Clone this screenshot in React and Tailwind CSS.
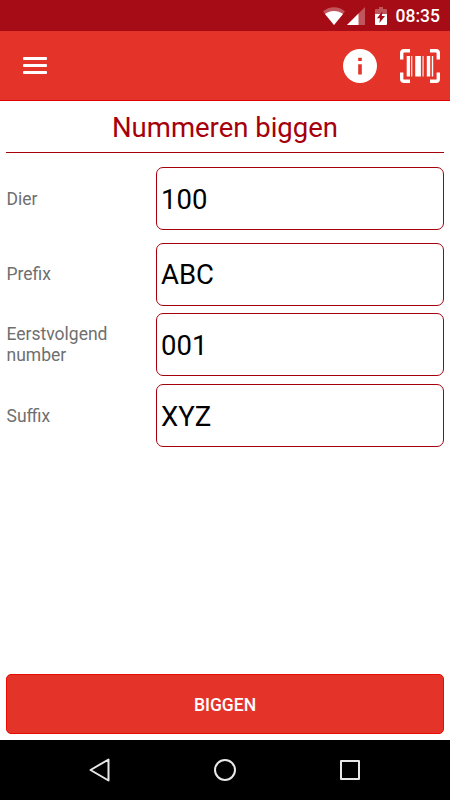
const FIELDS = [
    { label: 'Dier', value: '100', className: 'mt-3.5' },
    { label: 'Prefix', value: 'ABC', className: 'mt-[12.500px]' },
    { label: 'Eerstvolgend number', value: '001', className: 'mt-[7.500px]' },
    { label: 'Suffix', value: 'XYZ', className: 'mt-2' },
];

const WifiIcon = () => (
    <svg width="22" height="18" viewBox="0 0 22 18" className="shrink-0">
        <path d="M0 4.400C3 1.700 6.900 0.200 11 0.200S19 1.700 22 4.400L11 17.900Z" fill="#fff" fillOpacity="0.3" />
        <path d="M2 6.900C4.500 4.900 7.600 3.900 11 3.900S17.500 4.900 20 6.900L11 17.900Z" fill="#fff" />
    </svg>
);

const SignalIcon = () => (
    <svg width="18" height="18" viewBox="0 0 18 18" className="shrink-0">
        <path d="M0 18L18 0V18Z" fill="#fff" fillOpacity="0.3" />
        <path d="M0 18L11.500 6.500V18Z" fill="#fff" />
    </svg>
);

const BatteryIcon = () => (
    <svg width="12" height="18" viewBox="0 0 12 18" className="shrink-0">
        <path d="M1 2H4V0H8V2H11Q12 2 12 3V7H0V3Q0 2 1 2Z" fill="#fff" fillOpacity="0.3" />
        <path d="M0 7H12V17Q12 18 11 18H1Q0 18 0 17Z" fill="#fff" />
        <path d="M7.400 4.300L2 11.300H5L4.400 16L10 8.900H6.800Z" fill="#a50c16" />
    </svg>
);

const InfoIcon = () => (
    <svg width="34" height="34" viewBox="0 0 34 34">
        <circle cx="17" cy="17" r="17" fill="#fff" />
        <path d="M15.200 8.800H18.800V12.100H15.200ZM15.200 15.300H18.800V25.500H15.200Z" fill="#e43328" />
    </svg>
);

const BarcodeIcon = () => (
    <svg width="40" height="34" viewBox="0 0 40 34">
        <path
            d="M1.700 10.500V4Q1.700 1.700 4 1.700H10M30 1.700H36Q38.300 1.700 38.300 4V10.500M38.300 23.500V30Q38.300 32.300 36 32.300H30M10 32.300H4Q1.700 32.300 1.700 30V23.500"
            fill="none"
            stroke="#fff"
            strokeWidth="3.4"
        />
        <path
            d="M6.700 7H10V27.500H6.700ZM11.200 7H12.300V27.500H11.200ZM15.200 7H20.900V27.500H15.200ZM22.500 7H23.600V27.500H22.500ZM26.800 7H30.200V27.500H26.800ZM31.800 7H33.200V27.500H31.800Z"
            fill="#fff"
        />
    </svg>
);

const StatusBar = () => (
    <div className="flex h-[31px] items-center bg-[#a50c16] pr-[10px] text-white">
        <div className="ml-auto flex items-center">
            <WifiIcon />
            <div className="ml-[2px]"><SignalIcon /></div>
            <div className="ml-[10px]"><BatteryIcon /></div>
            <span className="ml-[9px] pt-[2px] text-[17.500px] leading-none font-medium">08:35</span>
        </div>
    </div>
);

const AppBar = () => (
    <header className="flex h-[70px] items-center border-b border-[#e60000] bg-[#e43328] pt-px pr-[10px] pl-[23px]">
        <button aria-label="Menu" className="-mt-px flex w-6 flex-col gap-[4.500px]">
            <span className="h-[2.500px] rounded-[1px] bg-white" />
            <span className="h-[2.500px] rounded-[1px] bg-white" />
            <span className="h-[2.500px] rounded-[1px] bg-white" />
        </button>
        <div className="ml-auto flex items-center gap-[23px]">
            <button aria-label="Info"><InfoIcon /></button>
            <button aria-label="Scan"><BarcodeIcon /></button>
        </div>
    </header>
);

const Field = ({ label, value, className = '' }) => (
    <div className={`flex items-center ${className}`}>
        <label className="w-[149.500px] shrink-0 pt-px pr-8 pl-[0.500px] text-[17.500px] leading-[21px] text-[#6f6f6f]">{label}</label>
        <div className="flex h-[63px] flex-1 items-center rounded-[7px] border border-[#a5000b] pt-[2px] pl-[4.500px] text-[27.500px] text-black">
            {value}
        </div>
    </div>
);

const NavBar = () => (
    <nav className="flex h-[60px] items-center justify-center gap-[103px] bg-black">
        <svg width="22" height="26" viewBox="0 0 22 26" fill="none" stroke="#e8e8e8" strokeWidth="2">
            <path d="M19.500 2.500V23.500L1.500 13Z" strokeLinejoin="round" />
        </svg>
        <svg width="22" height="26" viewBox="0 0 22 26" fill="none" stroke="#e8e8e8" strokeWidth="2">
            <circle cx="11" cy="13" r="10" />
        </svg>
        <svg width="22" height="26" viewBox="0 0 22 26" fill="none" stroke="#e8e8e8" strokeWidth="2">
            <rect x="2" y="4" width="18" height="18" strokeLinejoin="round" />
        </svg>
    </nav>
);

export default function App() {
    return (
        <div className="flex h-[800px] w-[450px] flex-col overflow-hidden bg-white font-[Roboto,sans-serif]">
            <StatusBar />
            <AppBar />
            <main className="flex flex-1 flex-col px-[6px] pb-[6px]">
                <h1 className="h-[52px] border-b border-[#a5000b] text-center text-[27.500px] leading-[53px] text-[#a5000b]">
                    Nummeren biggen
                </h1>
                {FIELDS.map((field) => (
                    <Field key={field.label} {...field} />
                ))}
                <button className="mt-auto h-[60px] rounded-[5px] border border-[#e90c00] bg-[#e43328] pt-[2px] text-[17.500px] font-medium text-white">
                    BIGGEN
                </button>
            </main>
            <NavBar />
        </div>
    );
}
